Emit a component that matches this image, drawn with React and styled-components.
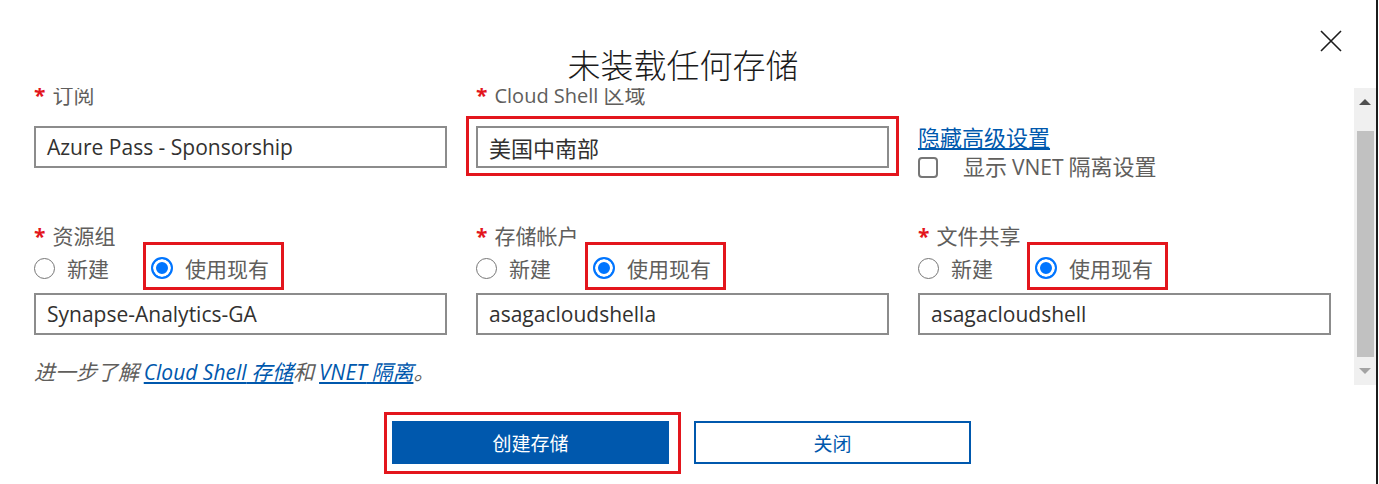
import React from 'react'
import styled, { createGlobalStyle, css } from 'styled-components'

const GlobalStyle = createGlobalStyle`
    html, body {
        margin: 0;
        background: #fff;
    }
    body {
        font-family: "Open Sans", "Noto Sans CJK SC", sans-serif;
        color: #323130;
    }
`

const red = '#e3161d'
const blue = '#0058ad'
const cjk = '"Noto Sans CJK SC", sans-serif'

const Dialog = styled.div`
    box-sizing: border-box;
    width: 1378px;
    height: 484px;
    border-right: 2px solid #1b1b1b;
    display: flex;
    flex-direction: column;
    overflow: hidden;
`

const Header = styled.div`
    height: 88px;
    flex: none;
    display: grid;
    grid-template-columns: 1fr auto 1fr;
    align-items: start;
    padding-right: 10px;
`

const Title = styled.h1`
    grid-column: 2;
    margin: 44px 0 0;
    font-family: ${cjk};
    font-size: 33px;
    font-weight: 300;
    line-height: 40px;
    color: #1b1b1b;
`

const CloseButton = styled.button`
    grid-column: 3;
    justify-self: end;
    margin: 30px 24px 0 0;
    padding: 0;
    border: none;
    background: none;
    width: 22px;
    height: 22px;
    display: flex;
`

const Body = styled.div`
    flex: none;
    height: 297px;
    display: flex;
`

const ScrollArea = styled.div`
    flex: 1;
    overflow: hidden;
    padding: 0 23px 0 34px;
`

const ScrollInner = styled.div`
    margin-top: -8px;
`

const Grid = styled.div`
    display: grid;
    grid-template-columns: repeat(3, 1fr);
    grid-template-rows: 88px auto auto;
    column-gap: 29px;
    row-gap: 53px;
`

const Field = styled.div`
    display: flex;
    flex-direction: column;
`

const Label = styled.div`
    font-family: ${cjk};
    font-size: 21px;
    line-height: 28px;
    height: 28px;
    color: #605e5c;
    margin-bottom: ${p => p.$gap || 18}px;
    white-space: nowrap;
`

const Latin = styled.span`
    font-family: "Open Sans", sans-serif;
    font-size: ${p => p.$size || 20}px;
`

const Star = styled.span`
    font-family: "Open Sans", sans-serif;
    font-weight: 700;
    font-size: 21px;
    color: ${red};
    margin-right: 7px;
`

const Highlight = styled.div`
    position: relative;
    ${p => p.$block ? css`display: block;` : css`display: inline-flex;`}
    &::after {
        content: '';
        position: absolute;
        top: -${p => p.$t}px;
        right: -${p => p.$r}px;
        bottom: -${p => p.$b}px;
        left: -${p => p.$l}px;
        border: 3px solid ${red};
        pointer-events: none;
    }
`

const TextBox = styled.div`
    box-sizing: border-box;
    height: 42px;
    border: 2px solid #8c8c8c;
    padding: 0 11px;
    display: flex;
    align-items: center;
    font-size: ${p => p.$cjk ? 22 : 21}px;
    font-family: ${p => p.$cjk ? cjk : '"Open Sans", sans-serif'};
    color: #323130;
    white-space: nowrap;
`

const Advanced = styled.div`
    margin-top: 42px;
    display: flex;
    flex-direction: column;
    gap: 0;
`

const Link = styled.a`
    color: ${blue};
    text-decoration: underline;
    cursor: pointer;
`

const AdvancedLink = styled(Link)`
    font-family: ${cjk};
    font-size: 22px;
    line-height: 28px;
    align-self: flex-start;
`

const CheckRow = styled.label`
    display: flex;
    align-items: center;
    gap: 25px;
    font-family: ${cjk};
    font-size: 22px;
    line-height: 30px;
    color: #605e5c;
    white-space: nowrap;
`

const CheckBox = styled.span`
    box-sizing: border-box;
    flex: none;
    width: 20px;
    height: 21px;
    border: 2px solid #767676;
    border-radius: 4px;
    margin-top: 3px;
`

const RadioGroup = styled.div`
    display: flex;
    align-items: center;
    gap: 42px;
    height: 28px;
    margin-bottom: 11px;
`

const RadioItem = styled.label`
    display: flex;
    align-items: center;
    gap: 12px;
    font-family: ${cjk};
    font-size: 21px;
    line-height: 28px;
    color: #605e5c;
`

const RadioCircle = styled.span`
    box-sizing: border-box;
    width: 21px;
    height: 21px;
    border-radius: 50%;
    border: 1.5px solid #767676;
    background: #fff;
    ${p => p.$checked && css`
        width: 22px;
        height: 22px;
        border: 2px solid #0075ff;
        box-shadow: inset 0 0 0 3px #fff;
        background: #0075ff;
    `}
`

const LearnMore = styled.div`
    grid-column: 1 / -1;
    margin-top: -31px;
    font-family: ${cjk};
    font-size: 21px;
    line-height: 28px;
    font-style: italic;
    color: #605e5c;
    white-space: nowrap;
`

const Scrollbar = styled.div`
    flex: none;
    width: 22px;
    background: #f0f0f0;
    display: flex;
    flex-direction: column;
    align-items: center;
`

const ScrollArrow = styled.div`
    height: 28px;
    flex: none;
    display: flex;
    align-items: center;
    justify-content: center;
    &::before {
        content: '';
        border-left: 6px solid transparent;
        border-right: 6px solid transparent;
        ${p => p.$down
            ? css`border-top: 6px solid #a3a3a3;`
            : css`border-bottom: 6px solid #505050;`}
    }
`

const ScrollThumb = styled.div`
    width: 17px;
    margin-top: 15px;
    height: 229px;
    background: #c1c1c1;
`

const Footer = styled.div`
    display: flex;
    justify-content: center;
    gap: 25px;
    padding: 36px 13px 0 0;
`

const Button = styled.button`
    box-sizing: border-box;
    width: 277px;
    height: 43px;
    font-family: ${cjk};
    font-size: 19px;
    border: 2px solid ${blue};
    background: #fff;
    color: ${blue};
    ${p => p.$primary && css`
        background: ${blue};
        color: #fff;
    `}
`

function CloseIcon() {
    return (
        <svg width="22" height="22" viewBox="0 0 22 22">
            <path d="M1 1 L21 21 M21 1 L1 21" stroke="#1b1b1b" strokeWidth="1.6" fill="none" />
        </svg>
    )
}

function Radios() {
    return (
        <RadioGroup>
            <RadioItem><RadioCircle />新建</RadioItem>
            <Highlight $t={12} $r={15} $b={8} $l={8}>
                <RadioItem><RadioCircle $checked />使用现有</RadioItem>
            </Highlight>
        </RadioGroup>
    )
}

function ResourceField({ label, value }) {
    return (
        <Field>
            <Label $gap={5}><Star>*</Star>{label}</Label>
            <Radios />
            <TextBox>{value}</TextBox>
        </Field>
    )
}

export default function App() {
    return (
        <>
            <GlobalStyle />
            <Dialog>
                <Header>
                    <Title>未装载任何存储</Title>
                    <CloseButton aria-label="关闭"><CloseIcon /></CloseButton>
                </Header>
                <Body>
                    <ScrollArea>
                        <ScrollInner>
                            <Grid>
                                <Field>
                                    <Label><Star>*</Star>订阅</Label>
                                    <TextBox>Azure Pass - Sponsorship</TextBox>
                                </Field>
                                <Field>
                                    <Label><Star>*</Star><Latin>Cloud Shell </Latin>区域</Label>
                                    <Highlight $block $t={10} $r={10} $b={8} $l={10}>
                                        <TextBox $cjk>美国中南部</TextBox>
                                    </Highlight>
                                </Field>
                                <Advanced>
                                    <AdvancedLink>隐藏高级设置</AdvancedLink>
                                    <CheckRow>
                                        <CheckBox />
                                        <span>显示 <Latin $size={21}>VNET</Latin> 隔离设置</span>
                                    </CheckRow>
                                </Advanced>
                                <ResourceField label="资源组" value="Synapse-Analytics-GA" />
                                <ResourceField label="存储帐户" value="asagacloudshella" />
                                <ResourceField label="文件共享" value="asagacloudshell" />
                                <LearnMore>
                                    进一步了解 <Link><Latin $size={21}>Cloud Shell</Latin> 存储</Link>和 <Link><Latin $size={21}>VNET</Latin> 隔离</Link>。
                                </LearnMore>
                            </Grid>
                        </ScrollInner>
                    </ScrollArea>
                    <Scrollbar>
                        <ScrollArrow />
                        <ScrollThumb />
                        <ScrollArrow $down />
                    </Scrollbar>
                </Body>
                <Footer>
                    <Highlight $t={9} $r={12} $b={10} $l={8}>
                        <Button $primary>创建存储</Button>
                    </Highlight>
                    <Button>关闭</Button>
                </Footer>
            </Dialog>
        </>
    )
}
